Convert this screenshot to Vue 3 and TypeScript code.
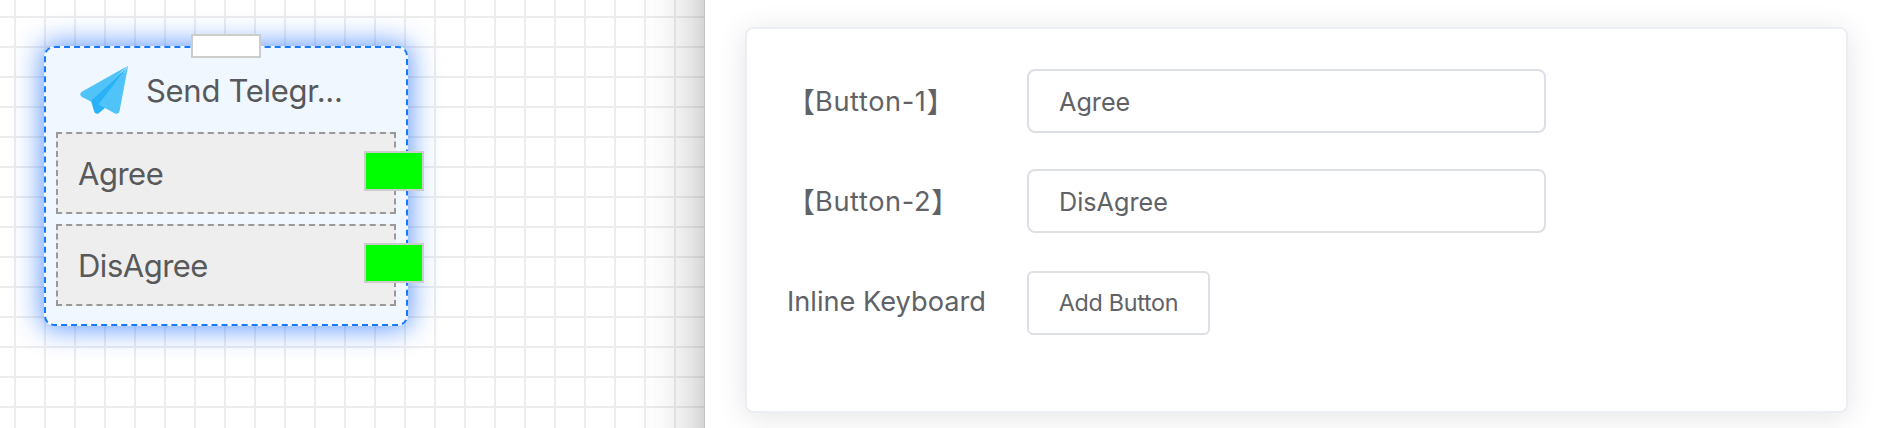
<script setup lang="ts">
import { ref } from 'vue'

interface InlineButton {
  id: number
  text: string
}

const title = 'Send Telegr...'
const buttons = ref<InlineButton[]>([
  { id: 1, text: 'Agree' },
  { id: 2, text: 'DisAgree' },
])

function addButton(): void {
  const id = buttons.value.length + 1
  buttons.value.push({ id, text: `Button ${id}` })
}
</script>

<template>
  <div class="editor">
    <main class="canvas">
      <section class="node">
        <span class="port-in"></span>
        <header class="node-head">
          <svg class="plane" viewBox="0 0 48 48" width="48" height="48" aria-hidden="true">
            <path
              fill="#50c4f8"
              d="M47 .2 L1.800 25.800 Q-.8 27.500 .9 30 Q1.600 31 4 32 L11.300 35.700 L47 .2 Z"
            />
            <path
              fill="#29b2f7"
              d="M46.500 1.500 L11 35 L14.300 45.800 Q15.600 49 18.800 47.200 L24.500 42.200 Z"
            />
            <path
              fill="#50c4f8"
              d="M48 .4 Q47.800 -.2 47 1 L18.500 38.600 L34.500 47.200 Q38.400 49 39.500 45.300 Z"
            />
            <path fill="none" stroke="#8cd9fb" stroke-width="1" d="M47.300 .8 L41 6.600 M47.400 1 L44.500 7" />
          </svg>
          <span class="node-title">{{ title }}</span>
        </header>
        <div class="outputs">
          <div v-for="b in buttons" :key="b.id" class="output">
            <span>{{ b.text }}</span>
            <i class="port-out"></i>
          </div>
        </div>
      </section>
    </main>

    <aside class="drawer">
      <form class="card" @submit.prevent>
        <div v-for="b in buttons" :key="b.id" class="row">
          <label class="label" :for="`btn-${b.id}`"
            ><span class="bracket">【</span><span class="name">Button-{{ b.id }}</span
            ><span class="bracket">】</span></label
          >
          <input :id="`btn-${b.id}`" v-model="b.text" class="input" type="text" />
        </div>
        <div class="row">
          <span class="label">Inline Keyboard</span>
          <button class="add" type="button" @click="addButton">Add Button</button>
        </div>
      </form>
    </aside>
  </div>
</template>

<style>
body {
  overflow: hidden;
}
</style>

<style scoped>
.editor {
  display: flex;
  height: 428px;
  overflow: hidden;
  background: #fff;
  font-family: Inter, 'Liberation Sans', 'Noto Sans CJK SC', sans-serif;
}
.editor * {
  box-sizing: border-box;
}
.canvas {
  position: relative;
  flex: 0 0 705px;
  background-color: #fff;
  background-image: linear-gradient(#ededed 2px, transparent 2px),
    linear-gradient(90deg, #ededed 2px, transparent 2px);
  background-size: 30px 30px;
  background-position: 14px 16px;
}
.node {
  position: absolute;
  left: 44px;
  top: 46px;
  width: 364px;
  height: 280px;
  padding: 0 10px;
  border: 2px dashed #1879ff;
  border-radius: 10px;
  background: #f0f7ff;
  box-shadow: 0 0 34px rgba(24, 121, 255, 0.3), 0 0 24px 2px rgba(30, 100, 255, 0.5);
  color: #58595b;
  font-size: 31px;
}
.port-in {
  position: absolute;
  top: -14px;
  left: 145px;
  width: 70px;
  height: 24px;
  border: 2px solid #ccc;
  background: #fff;
}
.node-head {
  display: flex;
  align-items: center;
  height: 84px;
  padding-left: 24px;
}
.plane {
  flex: none;
  overflow: visible;
}
.node-title {
  margin-left: 18px;
  letter-spacing: -0.3px;
  white-space: nowrap;
}
.outputs {
  display: flex;
  flex-direction: column;
  gap: 10px;
}
.output {
  position: relative;
  display: flex;
  align-items: center;
  height: 82px;
  padding-left: 20px;
  border: 2px dashed #999;
  background: #eee;
  letter-spacing: -0.5px;
}
.port-out {
  position: absolute;
  top: 17px;
  right: -30px;
  width: 60px;
  height: 40px;
  border: 2px solid #ccc;
  background: #0f0;
}
.drawer {
  position: relative;
  flex: 1;
  margin: -120px 0;
  padding: 147px 40px 0;
  background: #fff;
  box-shadow: 0 16px 20px -10px rgba(0, 0, 0, 0.2), 0 32px 48px 4px rgba(0, 0, 0, 0.14),
    0 12px 60px 10px rgba(0, 0, 0, 0.12);
}
.card {
  display: flex;
  flex-direction: column;
  gap: 36px;
  height: 386px;
  padding: 40px;
  border: 2px solid #ebeef5;
  border-radius: 8px;
  background: #fff;
  box-shadow: 0 4px 30px rgba(0, 0, 0, 0.11);
  color: #606266;
}
.row {
  display: flex;
  align-items: center;
  height: 64px;
}
.label {
  display: flex;
  align-items: center;
  flex: 0 0 240px;
  height: 64px;
  font-size: 27.2px;
  white-space: nowrap;
}
.bracket {
  font-family: 'Noto Sans CJK SC', sans-serif;
  font-size: 28px;
  line-height: 40px;
}
.name {
  letter-spacing: 0.6px;
}
.input {
  width: 519px;
  height: 64px;
  padding: 1px 30px 0;
  border: 2px solid #dcdfe6;
  border-radius: 8px;
  outline: none;
  background: #fff;
  color: #606266;
  font: 25.2px Inter, 'Liberation Sans', sans-serif;
}
.add {
  width: 183px;
  height: 64px;
  margin-top: 4px;
  padding: 0 0 2px;
  border: 2px solid #dcdfe6;
  border-radius: 6px;
  background: #fff;
  color: #606266;
  font: 23.3px Inter, 'Liberation Sans', sans-serif;
  letter-spacing: -0.28px;
}
</style>
